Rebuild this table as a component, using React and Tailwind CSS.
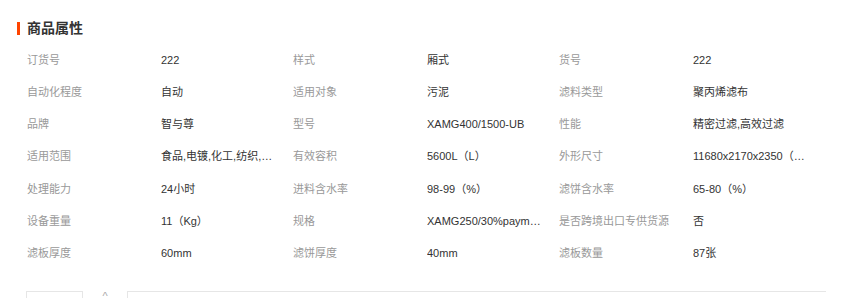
// 商品属性 — product attribute table

const attrs = [
  ["订货号", "222", "样式", "厢式", "货号", "222"],
  ["自动化程度", "自动", "适用对象", "污泥", "滤料类型", "聚丙烯滤布"],
  ["品牌", "智与尊", "型号", "XAMG400/1500-UB", "性能", "精密过滤,高效过滤"],
  ["适用范围", "食品,电镀,化工,纺织,印染,制药", "有效容积", "5600L（L）", "外形尺寸", "11680x2170x2350（mm）"],
  ["处理能力", "24小时", "进料含水率", "98-99（%）", "滤饼含水率", "65-80（%）"],
  ["设备重量", "11（Kg）", "规格", "XAMG250/30%payment", "是否跨境出口专供货源", "否"],
  ["滤板厚度", "60mm", "滤饼厚度", "40mm", "滤板数量", "87张"],
];

export default function App() {
  return (
    <div
      className="h-[298px] w-[853px] overflow-hidden bg-white text-[11px]"
      style={{ fontFamily: '"Liberation Sans", "Noto Sans CJK SC", sans-serif' }}
    >
      {/* 标题 */}
      <div className="flex items-center pl-[17px] pt-[21px]">
        <span className="h-[13px] w-[3px] bg-[#ff4400]" />
        <h2 className="ml-[7px] text-[14px] font-bold leading-[14px] text-[#333]">商品属性</h2>
      </div>

      {/* 属性表 */}
      <div className="mt-[9px] pl-[27px]">
        {attrs.map((row, i) => (
          <div key={i} className="flex h-[32.2px] items-center">
            {[0, 2, 4].map((j) => (
              <div key={j} className="flex w-[266px]">
                <span className="w-[134px] truncate pr-[8px] text-[#999]">{row[j]}</span>
                <span className="w-[114px] truncate text-[#333]">{row[j + 1]}</span>
              </div>
            ))}
          </div>
        ))}
      </div>

      {/* 底部标签栏 */}
      <div className="mt-[22px] flex items-start pl-[26px]">
        <div className="h-[10px] w-[57px] border-x border-t border-[#e6e6e6]" />
        <span className="mt-[-1px] w-[44px] text-center text-[11px] leading-[12px] text-[#aaa]">^</span>
        <div className="h-[10px] w-[699px] border-l border-t border-[#e6e6e6]" />
      </div>
    </div>
  );
}
